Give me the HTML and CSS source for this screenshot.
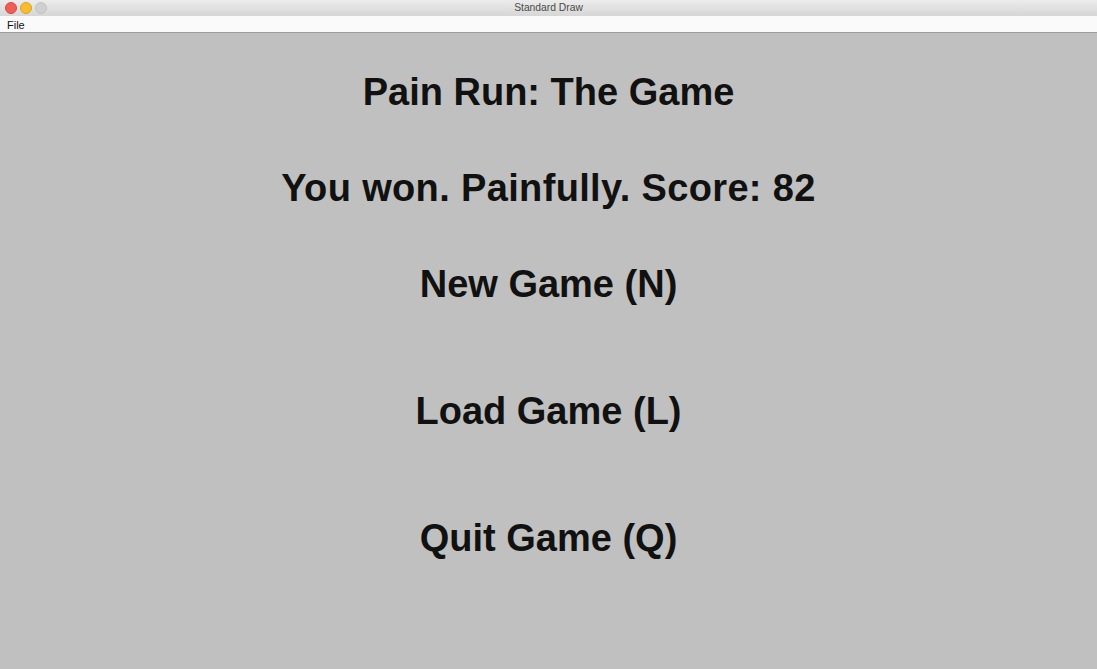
FILE: index.html
```html
<!DOCTYPE html>
<html>
<head>
<meta charset="utf-8">
<title>Standard Draw</title>
<link rel="stylesheet" href="styles.css">
</head>
<body>
<div class="window">
  <div class="titlebar">
    <div class="lights">
      <span class="light red"></span>
      <span class="light yellow"></span>
      <span class="light gray"></span>
    </div>
    <div class="title">Standard Draw</div>
  </div>
  <div class="menubar"><span class="menu">File</span></div>
  <main class="canvas">
    <div class="line">Pain Run: The Game</div>
    <div class="line score">You won. Painfully. Score: 82</div>
    <div class="line">New Game (N)</div>
    <div class="line wide">Load Game (L)</div>
    <div class="line wide">Quit Game (Q)</div>
  </main>
</div>
</body>
</html>
```
FILE: styles.css
```css
* { box-sizing: border-box; }
html, body { margin: 0; padding: 0; }
body {
  width: 1097px;
  height: 669px;
  overflow: hidden;
  font-family: "Liberation Sans", Arial, sans-serif;
  background: #c0c0c0;
}
.window {
  display: flex;
  flex-direction: column;
  height: 669px;
}
.titlebar {
  height: 16px;
  position: relative;
  background: linear-gradient(#ececec, #d6d6d6);
  display: flex;
  align-items: center;
  justify-content: center;
}
.lights {
  position: absolute;
  left: 5px;
  top: 2px;
  display: flex;
  gap: 3px;
}
.light {
  width: 12px;
  height: 12px;
  border-radius: 50%;
  display: block;
}
.red { background: #ee5f58; border: 0.5px solid #d9483f; }
.yellow { background: #f6bd30; border: 0.5px solid #dea227; }
.gray { background: #d0d0d0; border: 0.5px solid #c2c2c2; }
.title {
  font-family: "Liberation Sans", Arial, sans-serif;
  font-size: 10.3px;
  color: #4a4a4a;
  line-height: 16px;
}
.menubar {
  height: 17px;
  background: #fafafa;
  border-bottom: 1px solid #9c9c9c;
  padding-left: 7px;
  padding-top: 2px;
  display: flex;
  align-items: center;
}
.menu {
  font-size: 11px;
  color: #111;
  line-height: 15px;
}
.canvas {
  flex: 1;
  background: #c0c0c0;
  display: flex;
  flex-direction: column;
  align-items: center;
  padding-top: 40px;
  gap: 58px;
}
.line {
  font-weight: bold;
  font-size: 38px;
  line-height: 38px;
  color: #111;
  white-space: nowrap;
}
.line.score { letter-spacing: 0.35px; }
.line.wide { margin-top: 31px; }
```
